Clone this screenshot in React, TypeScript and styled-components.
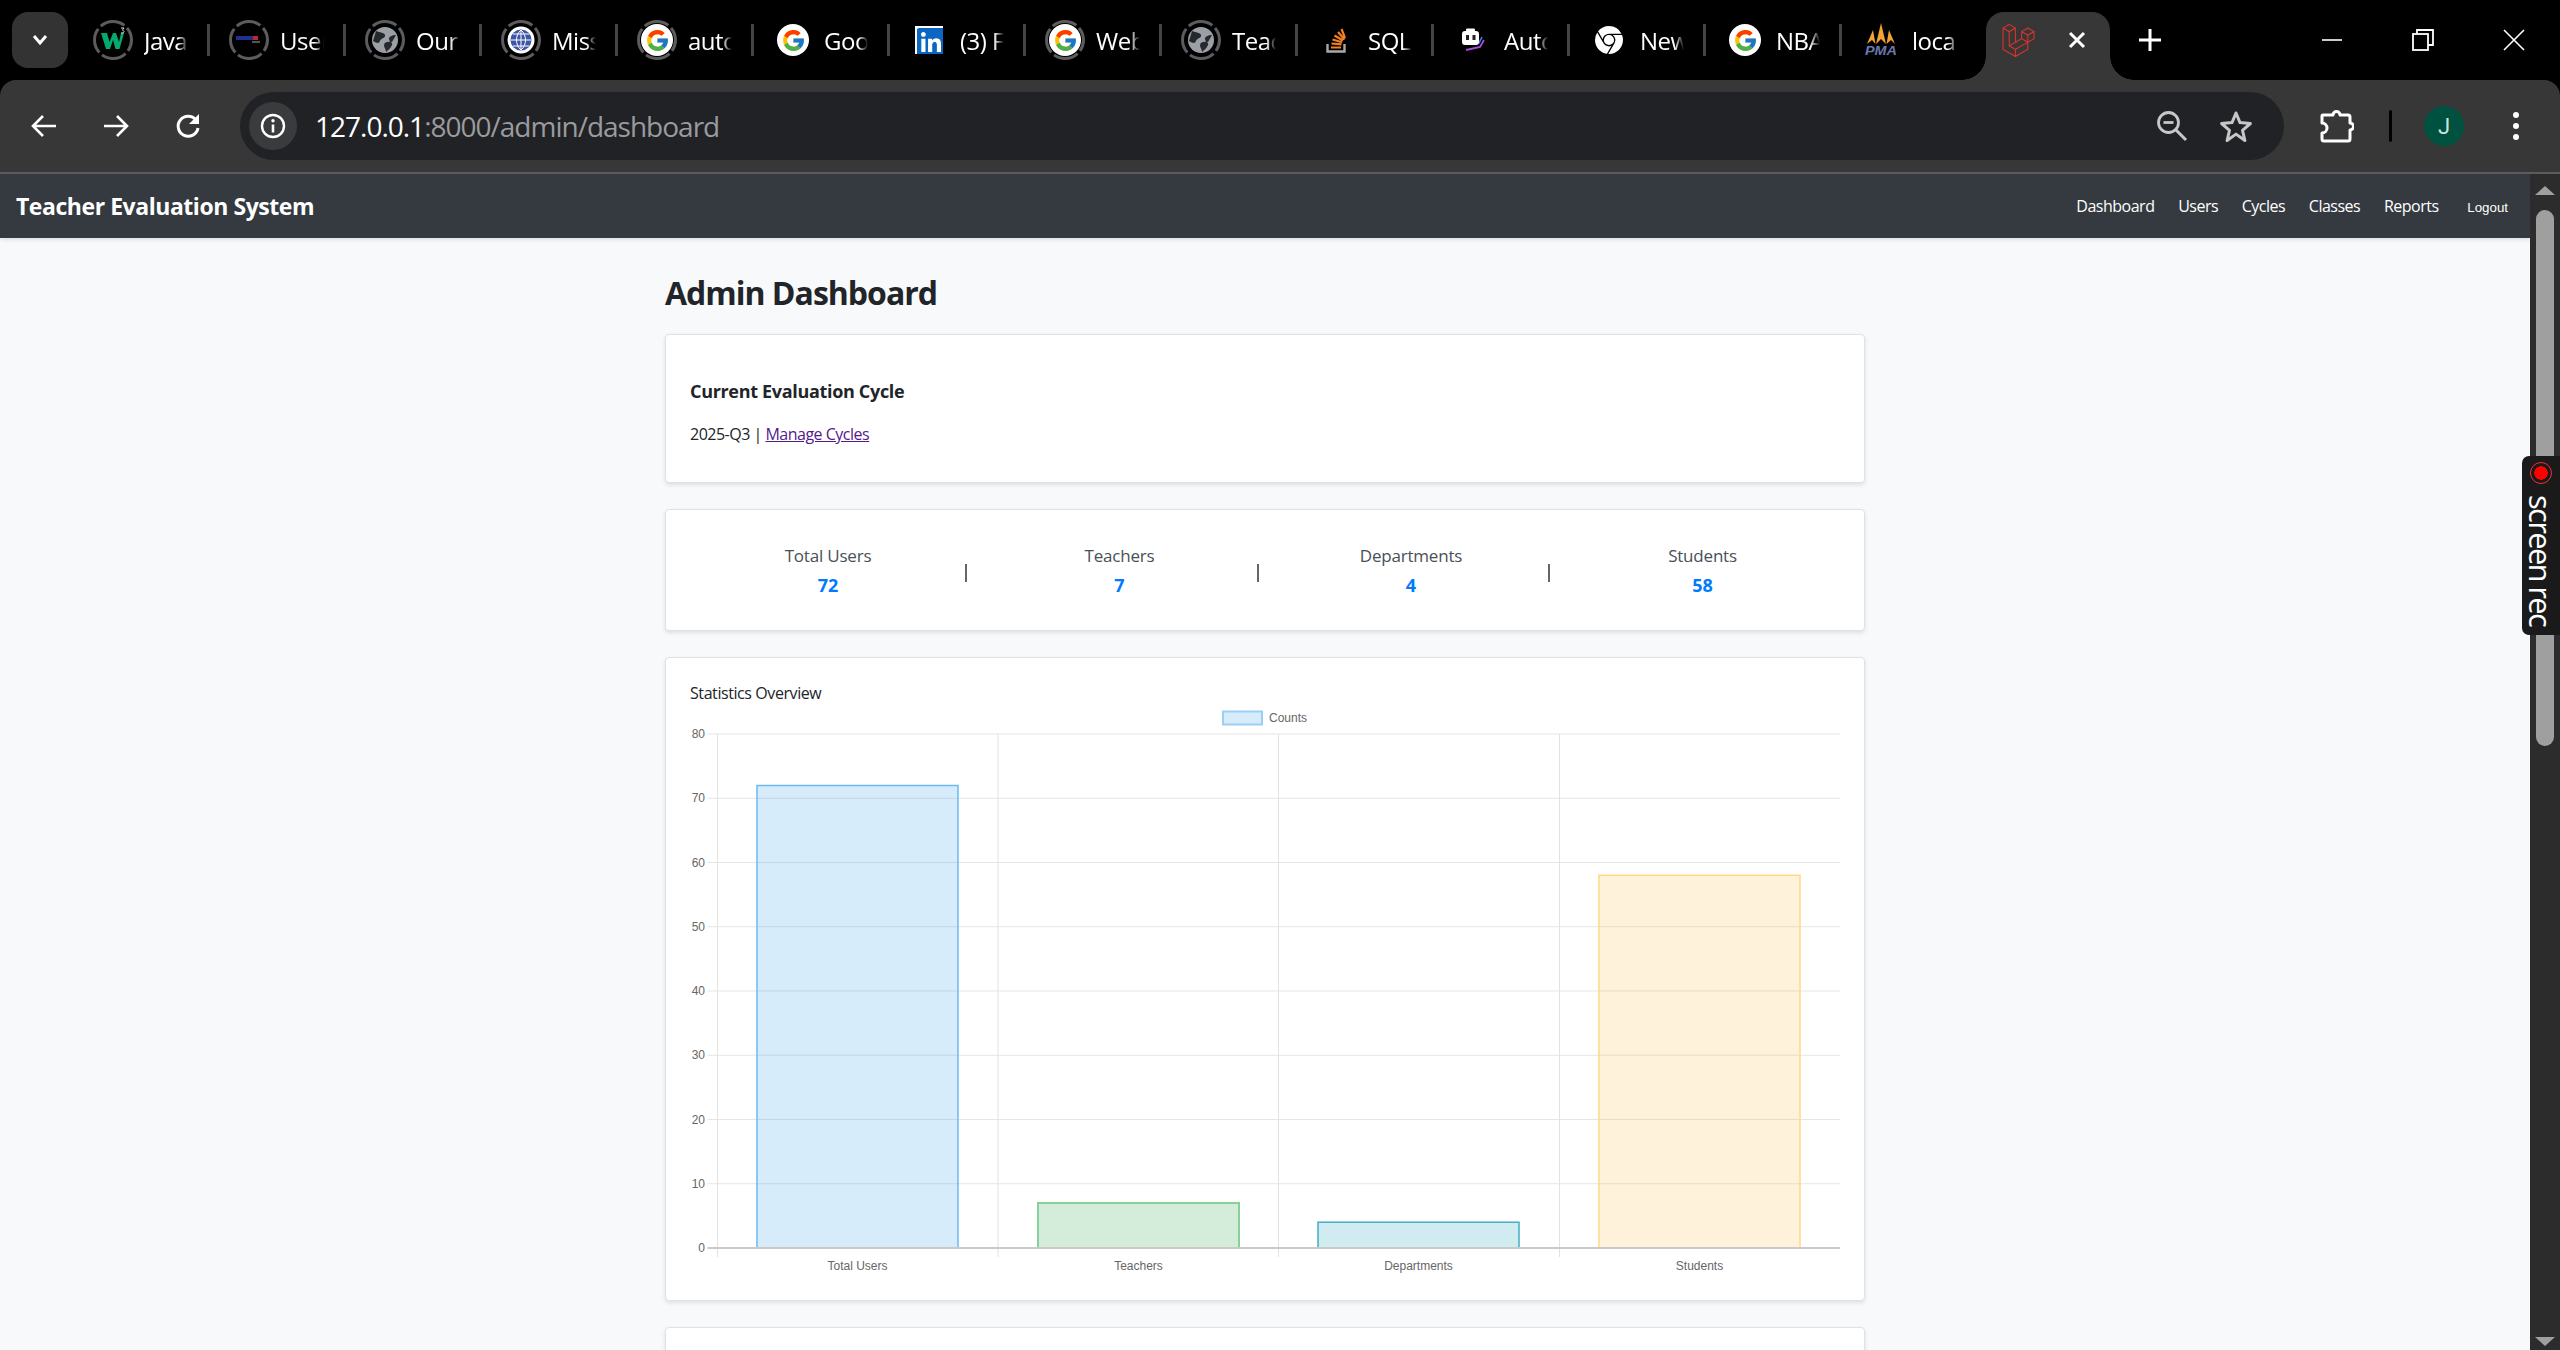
import React from "react";
import styled, { createGlobalStyle } from "styled-components";
import { FcGoogle } from "react-icons/fc";
import { FaLinkedin } from "react-icons/fa";
import { SiLaravel, SiGooglechrome } from "react-icons/si";

const UI_FONT = `"Open Sans", "Noto Sans", sans-serif`;

const GlobalStyle = createGlobalStyle`
    html, body {
        margin: 0;
        height: 100%;
        overflow: hidden;
        background: #000;
        font-family: ${UI_FONT};
    }
    #root { height: 100%; }
`;

type FaviconKind = "w3" | "user" | "globe" | "blueglobe" | "google" | "linkedin" | "so" | "robot" | "chrome" | "pma";

const TABS: { title: string; icon: FaviconKind; loading?: boolean }[] = [
    { title: "Java", icon: "w3", loading: true },
    { title: "User", icon: "user", loading: true },
    { title: "Our", icon: "globe", loading: true },
    { title: "Miss", icon: "blueglobe", loading: true },
    { title: "auto", icon: "google", loading: true },
    { title: "Goog", icon: "google" },
    { title: "(3) F", icon: "linkedin" },
    { title: "Web", icon: "google", loading: true },
    { title: "Teac", icon: "globe", loading: true },
    { title: "SQL", icon: "so" },
    { title: "Auto", icon: "robot" },
    { title: "New", icon: "chrome" },
    { title: "NBA", icon: "google" },
    { title: "loca", icon: "pma" },
];

const STATS = [
    { label: "Total Users", value: 72 },
    { label: "Teachers", value: 7 },
    { label: "Departments", value: 4 },
    { label: "Students", value: 58 },
];

const BARS = [
    { label: "Total Users", value: 72, x: 67, fill: "rgba(54,162,235,0.2)", stroke: "#6bb9ef", sw: 1.5 },
    { label: "Teachers", value: 7, x: 348, fill: "rgba(40,167,69,0.2)", stroke: "#86d09a", sw: 2 },
    { label: "Departments", value: 4, x: 628, fill: "rgba(23,162,184,0.2)", stroke: "#3fb0c2", sw: 1.5 },
    { label: "Students", value: 58, x: 909, fill: "rgba(255,190,70,0.2)", stroke: "#fdd98a", sw: 1.5 },
];

const CHART_TOP = 29;
const CHART_BOTTOM = 543;
const CHART_LEFT = 27.5;
const CHART_RIGHT = 1150;
const BAR_WIDTH = 201;
const GRID_X = [27.5, 308, 588.5, 869.5];
const yFor = (v: number) => CHART_BOTTOM - (v / 80) * (CHART_BOTTOM - CHART_TOP);

function Favicon({ kind }: { kind: FaviconKind }) {
    switch (kind) {
        case "google":
            return (
                <GoogleDisc>
                    <FcGoogle size={25} />
                </GoogleDisc>
            );
        case "linkedin":
            return (
                <LinkedinBox>
                    <FaLinkedin size={32} color="#0a66c2" />
                </LinkedinBox>
            );
        case "chrome":
            return <SiGooglechrome size={28} color="#fff" />;
        case "w3":
            return (
                <svg width="26" height="28" viewBox="0 0 26 28">
                    <path d="M1 7h6l2.5 9L13 7h3l3 9 2-9h3l-4.5 16h-4L13 14l-3 9H6z" fill="#04aa6d" />
                    <path d="M21 2h3l-1.5 2 1.5 1.5-1 1.5h-2" fill="none" stroke="#ddd" strokeWidth="1" />
                </svg>
            );
        case "user":
            return (
                <svg width="28" height="14" viewBox="0 0 28 14">
                    <rect x="1" y="3" width="17" height="4" fill="#23308f" />
                    <rect x="18" y="3" width="5" height="4" fill="#c0272d" />
                    <rect x="17" y="8" width="8" height="2" fill="#555" />
                </svg>
            );
        case "globe":
            return (
                <svg width="28" height="28" viewBox="0 0 28 28">
                    <circle cx="14" cy="14" r="13" fill="#9aa0a6" />
                    <path d="M5 5c4 2 8 1 9 4s-4 3-5 6-4 2-7 0M25 9c-3 0-7 1-7 4s4 3 3 6-4 5-6 7c0-3-2-4-2-7s4-4 8-3" fill="#26282b" />
                </svg>
            );
        case "blueglobe":
            return (
                <svg width="28" height="28" viewBox="0 0 28 28">
                    <circle cx="14" cy="14" r="13.5" fill="#fff" />
                    <circle cx="14" cy="14" r="10.5" fill="#3c55a5" />
                    <path d="M4 14h20M14 4v20M6 8h16M6 20h16M14 4c-6 5-6 15 0 20M14 4c6 5 6 15 0 20" stroke="#fff" strokeWidth="1" fill="none" />
                </svg>
            );
        case "so":
            return (
                <svg width="22" height="26" viewBox="0 0 22 26">
                    <path d="M1.5 17v7.5h17V17" fill="none" stroke="#a9a9a9" strokeWidth="2.4" />
                    <path d="M5 20.5h10M5.5 16.5l10 .8M6.5 12.5l9.5 2.8M8.5 8.5l8.5 5M12 5l6.5 7.5M15.5 2l3.5 9" stroke="#f48024" strokeWidth="2.2" />
                </svg>
            );
        case "robot":
            return (
                <svg width="26" height="24" viewBox="0 0 26 24">
                    <path d="M5 16l14-1 3-6" fill="none" stroke="#4a7fe8" strokeWidth="1.6" />
                    <path d="M6 22l14-3 4-7" fill="none" stroke="#a64de0" strokeWidth="1.8" />
                    <rect x="2" y="3" width="17" height="14" rx="3" fill="#fff" />
                    <rect x="6" y="0.5" width="9" height="3" rx="1" fill="#fff" />
                    <rect x="6" y="7" width="3" height="5" fill="#222" />
                    <rect x="12.5" y="7" width="3" height="5" fill="#222" />
                </svg>
            );
        case "pma":
            return (
                <svg width="34" height="34" viewBox="0 0 34 34">
                    <path d="M3 21L9 7l2.5 14-3.5-4zM12 21L17 0l5 21-5-5zM22.5 21L25 7l6 14-4-4z" fill="#f4a234" />
                    <text x="1" y="32" fontFamily="'Liberation Sans', sans-serif" fontStyle="italic" fontWeight="700" fontSize="13" fill="#6c78af" textLength="32" lengthAdjust="spacingAndGlyphs">PMA</text>
                </svg>
            );
    }
}

function LoadingRing() {
    return (
        <RingSvg width="40" height="40" viewBox="0 0 40 40">
            <circle cx="20" cy="20" r="18.5" fill="none" stroke="#5c5c5c" strokeWidth="3" strokeDasharray="25.5 3.6" strokeDashoffset="14" />
        </RingSvg>
    );
}

function StatsChart() {
    return (
        <ChartSvg width="1150" height="572" viewBox="0 0 1150 572">
            <rect x="533" y="6.5" width="39" height="13" fill="rgba(54,162,235,0.2)" stroke="#9ad0f5" strokeWidth="2" />
            <AxisText x="579" y="17" textAnchor="start">Counts</AxisText>

            {[10, 20, 30, 40, 50, 60, 70, 80].map((v) => (
                <line key={v} x1={CHART_LEFT - 10} x2={CHART_RIGHT} y1={yFor(v)} y2={yFor(v)} stroke="#e5e5e5" strokeWidth="1" />
            ))}
            {GRID_X.map((x) => (
                <line key={x} x1={x} x2={x} y1={CHART_TOP} y2={CHART_BOTTOM + 9} stroke="#e2e2e2" strokeWidth="1" />
            ))}

            {BARS.map((b) => (
                <g key={b.label}>
                    <rect x={b.x} y={yFor(b.value)} width={BAR_WIDTH} height={CHART_BOTTOM - yFor(b.value)} fill={b.fill} />
                    <path
                        d={`M${b.x} ${CHART_BOTTOM}V${yFor(b.value)}H${b.x + BAR_WIDTH}V${CHART_BOTTOM}`}
                        fill="none"
                        stroke={b.stroke}
                        strokeWidth={b.sw}
                    />
                </g>
            ))}

            <line x1={CHART_LEFT - 10} x2={CHART_RIGHT} y1={CHART_BOTTOM} y2={CHART_BOTTOM} stroke="#c9c9c9" strokeWidth="2" />

            {[0, 10, 20, 30, 40, 50, 60, 70, 80].map((v) => (
                <AxisText key={v} x="15" y={yFor(v) + 4} textAnchor="end">
                    {v}
                </AxisText>
            ))}
            {BARS.map((b) => (
                <AxisText key={b.label} x={b.x + BAR_WIDTH / 2} y="565" textAnchor="middle">
                    {b.label}
                </AxisText>
            ))}
        </ChartSvg>
    );
}

export default function App(): React.ReactElement {
    return (
        <Browser>
            <GlobalStyle />
            <TabStrip>
                <TabMenuButton>
                    <svg width="18" height="12" viewBox="0 0 18 12">
                        <path d="M3 2l6 7 6-7" fill="none" stroke="#fff" strokeWidth="3" />
                    </svg>
                </TabMenuButton>
                <TabRow>
                    {TABS.map((t, i) => (
                        <Tab key={i}>
                            <FaviconBox>
                                {t.loading && <LoadingRing />}
                                <Favicon kind={t.icon} />
                            </FaviconBox>
                            <TabTitle>{t.title}</TabTitle>
                            {i < TABS.length - 1 && <TabDivider />}
                        </Tab>
                    ))}
                </TabRow>
                <ActiveTab>
                    <SiLaravel size={33} color="#e0332a" />
                    <svg width="18" height="18" viewBox="0 0 18 18">
                        <path d="M2 2l14 14M16 2L2 16" stroke="#fff" strokeWidth="3" />
                    </svg>
                </ActiveTab>
                <NewTab>
                    <svg width="22" height="22" viewBox="0 0 22 22">
                        <path d="M11 0v22M0 11h22" stroke="#fff" strokeWidth="3" />
                    </svg>
                </NewTab>
                <WindowControls>
                    <WindowButton>
                        <svg width="22" height="22" viewBox="0 0 22 22">
                            <path d="M1 11h20" stroke="#fff" strokeWidth="1.6" />
                        </svg>
                    </WindowButton>
                    <WindowButton>
                        <svg width="22" height="22" viewBox="0 0 22 22">
                            <rect x="1" y="5" width="15" height="16" fill="none" stroke="#fff" strokeWidth="1.8" />
                            <path d="M5 5V1h16v15h-5" fill="none" stroke="#fff" strokeWidth="1.8" />
                        </svg>
                    </WindowButton>
                    <WindowButton>
                        <svg width="22" height="22" viewBox="0 0 22 22">
                            <path d="M1 1l20 20M21 1L1 21" stroke="#fff" strokeWidth="1.6" />
                        </svg>
                    </WindowButton>
                </WindowControls>
            </TabStrip>

            <Toolbar>
                <ToolButton>
                    <svg width="26" height="24" viewBox="0 0 26 24">
                        <path d="M25 12H3M12 2L2 12l10 10" fill="none" stroke="#fff" strokeWidth="2.6" />
                    </svg>
                </ToolButton>
                <ToolButton>
                    <svg width="26" height="24" viewBox="0 0 26 24">
                        <path d="M1 12h22M14 2l10 10-10 10" fill="none" stroke="#fff" strokeWidth="2.6" />
                    </svg>
                </ToolButton>
                <ToolButton>
                    <svg width="26" height="26" viewBox="0 0 26 26">
                        <path d="M21 7a10 10 0 1 0 2 8" fill="none" stroke="#fff" strokeWidth="3" />
                        <path d="M24 1v10H14z" fill="#fff" />
                    </svg>
                </ToolButton>
                <AddressBar>
                    <InfoChip>
                        <svg width="26" height="26" viewBox="0 0 26 26">
                            <circle cx="13" cy="13" r="11" fill="none" stroke="#fff" strokeWidth="2.4" />
                            <path d="M13 11.5v8" stroke="#fff" strokeWidth="2.6" />
                            <circle cx="13" cy="7.8" r="1.7" fill="#fff" />
                        </svg>
                    </InfoChip>
                    <UrlText>
                        127.0.0.1<UrlRest>:8000/admin/dashboard</UrlRest>
                    </UrlText>
                    <AddressAction>
                        <svg width="32" height="32" viewBox="0 0 32 32">
                            <circle cx="12.5" cy="12.5" r="10" fill="none" stroke="#c7c7c7" strokeWidth="2.8" />
                            <path d="M7.5 12.5h10" stroke="#c7c7c7" strokeWidth="2.8" />
                            <path d="M20 20l10 10" stroke="#c7c7c7" strokeWidth="3" />
                        </svg>
                    </AddressAction>
                    <AddressAction>
                        <svg width="34" height="34" viewBox="0 0 34 34">
                            <path d="M17 4l4 9.6 10.4.9-7.9 6.8 2.4 10.2L17 25.1l-8.9 6.4 2.4-10.2-7.9-6.8 10.4-.9z" fill="none" stroke="#c7c7c7" strokeWidth="3" strokeLinejoin="round" />
                        </svg>
                    </AddressAction>
                </AddressBar>
                <ExtensionButton>
                    <svg width="34" height="34" viewBox="0 0 34 34">
                        <path
                            d="M3 6h10a3.5 3.5 0 0 1 7 0h8a2 2 0 0 1 2 2v6a3.5 3.5 0 0 1 0 7v9a2 2 0 0 1-2 2H4a2 2 0 0 1-2-2v-6a5 5 0 0 0 0-10V7a1 1 0 0 1 1-1z"
                            fill="none"
                            stroke="#fff"
                            strokeWidth="3"
                            strokeLinejoin="round"
                        />
                    </svg>
                </ExtensionButton>
                <ToolbarDivider />
                <Avatar>J</Avatar>
                <MenuButton>
                    <MenuDot />
                    <MenuDot />
                    <MenuDot />
                </MenuButton>
            </Toolbar>

            <Viewport>
                <Page>
                    <Navbar>
                        <Brand>Teacher Evaluation System</Brand>
                        <NavLinks>
                            <NavLink>Dashboard</NavLink>
                            <NavLink>Users</NavLink>
                            <NavLink>Cycles</NavLink>
                            <NavLink>Classes</NavLink>
                            <NavLink>Reports</NavLink>
                            <LogoutButton>Logout</LogoutButton>
                        </NavLinks>
                    </Navbar>
                    <Container>
                        <PageTitle>Admin Dashboard</PageTitle>
                        <CycleCard>
                            <CardHeading>Current Evaluation Cycle</CardHeading>
                            <CycleLine>
                                2025-Q3 | <CycleLink href="#">Manage Cycles</CycleLink>
                            </CycleLine>
                        </CycleCard>
                        <StatsCard>
                            {STATS.map((s, i) => (
                                <React.Fragment key={s.label}>
                                    <StatItem>
                                        <StatLabel>{s.label}</StatLabel>
                                        <StatValue>{s.value}</StatValue>
                                    </StatItem>
                                    {i < STATS.length - 1 && <StatDivider />}
                                </React.Fragment>
                            ))}
                        </StatsCard>
                        <ChartCard>
                            <ChartTitle>Statistics Overview</ChartTitle>
                            <StatsChart />
                        </ChartCard>
                        <EmptyCard />
                    </Container>
                </Page>
                <Scrollbar>
                    <ScrollUp />
                    <ScrollThumb />
                    <ScrollDown />
                </Scrollbar>
            </Viewport>

            <RecorderBadge>
                <RecorderDot />
                <RecorderText>screen rec</RecorderText>
            </RecorderBadge>
        </Browser>
    );
}

const Browser = styled.div`
    position: relative;
    display: flex;
    flex-direction: column;
    width: 2560px;
    height: 1350px;
    overflow: hidden;
    background: #000;
`;

const TabStrip = styled.div`
    display: flex;
    align-items: flex-start;
    height: 80px;
    flex: none;
    background: #000;
`;

const TabMenuButton = styled.div`
    display: grid;
    place-items: center;
    width: 56px;
    height: 56px;
    margin: 12px 0 0 12px;
    border-radius: 16px;
    background: #333;
`;

const TabRow = styled.div`
    display: flex;
    margin-left: 6px;
    padding-top: 20px;
`;

const Tab = styled.div`
    display: flex;
    align-items: center;
    width: 136px;
    height: 40px;
    padding-left: 19px;
    box-sizing: border-box;
`;

const FaviconBox = styled.div`
    position: relative;
    display: grid;
    place-items: center;
    flex: none;
    width: 40px;
    height: 40px;
`;

const RingSvg = styled.svg`
    position: absolute;
    inset: 0;
`;

const GoogleDisc = styled.div`
    display: grid;
    place-items: center;
    width: 32px;
    height: 32px;
    border-radius: 50%;
    background: #fff;
`;

const LinkedinBox = styled.div`
    display: grid;
    place-items: center;
    width: 28px;
    height: 28px;
    overflow: hidden;
    background: #fff;
`;

const TabTitle = styled.span`
    width: 46px;
    margin-left: 11px;
    overflow: hidden;
    white-space: nowrap;
    color: #fff;
    font-size: 24px;
    letter-spacing: -0.5px;
    -webkit-mask-image: linear-gradient(to right, #000 78%, transparent 100%);
    mask-image: linear-gradient(to right, #000 78%, transparent 100%);
`;

const TabDivider = styled.span`
    flex: none;
    width: 3px;
    height: 32px;
    margin-left: 19px;
    background: #444;
`;

const ActiveTab = styled.div`
    position: relative;
    display: flex;
    align-items: center;
    justify-content: space-between;
    box-sizing: border-box;
    width: 124px;
    height: 68px;
    margin: 12px 0 0 8px;
    padding: 0 24px 12px 16px;
    border-radius: 18px 18px 0 0;
    background: #373737;

    &::before,
    &::after {
        content: "";
        position: absolute;
        bottom: 0;
        width: 24px;
        height: 24px;
    }
    &::before {
        left: -24px;
        background: radial-gradient(circle at 0 0, transparent 23.5px, #373737 24px);
    }
    &::after {
        right: -24px;
        background: radial-gradient(circle at 100% 0, transparent 23.5px, #373737 24px);
    }
`;

const NewTab = styled.div`
    display: grid;
    place-items: center;
    width: 22px;
    height: 22px;
    margin: 29px 0 0 29px;
`;

const WindowControls = styled.div`
    display: flex;
    margin: 29px 0 0 auto;
    padding-right: 35px;
    gap: 69px;
`;

const WindowButton = styled.div`
    display: grid;
    place-items: center;
    width: 22px;
    height: 22px;
`;

const Toolbar = styled.div`
    display: flex;
    align-items: center;
    flex: none;
    height: 92px;
    padding: 0 8px;
    border-bottom: 2px solid #5c5c5c;
    border-radius: 16px 16px 0 0;
    background: #373737;
`;

const ToolButton = styled.div`
    display: grid;
    place-items: center;
    flex: none;
    width: 72px;
    height: 68px;
`;

const AddressBar = styled.div`
    display: flex;
    align-items: center;
    flex: 1;
    height: 68px;
    margin-left: 16px;
    padding: 0 16px 0 9px;
    border-radius: 34px;
    background: #212225;
`;

const InfoChip = styled.div`
    display: grid;
    place-items: center;
    flex: none;
    width: 48px;
    height: 48px;
    border-radius: 50%;
    background: #3a3b3d;
`;

const UrlText = styled.div`
    flex: 1;
    margin-left: 18px;
    color: #fff;
    font-size: 28px;
    letter-spacing: -1px;
`;

const UrlRest = styled.span`
    color: #9a9b9d;
`;

const AddressAction = styled.div`
    display: grid;
    place-items: center;
    width: 64px;
    height: 64px;
`;

const ExtensionButton = styled(ToolButton)`
    margin-left: 17px;
`;

const ToolbarDivider = styled.div`
    flex: none;
    width: 3px;
    height: 32px;
    margin-left: 16px;
    border-radius: 2px;
    background: #000;
`;

const Avatar = styled.div`
    display: grid;
    place-items: center;
    flex: none;
    width: 40px;
    height: 40px;
    margin-left: 32px;
    border-radius: 50%;
    background: #00513f;
    color: #c5e6dc;
    font-family: "Roboto", sans-serif;
    font-size: 22px;
`;

const MenuButton = styled(ToolButton)`
    display: flex;
    flex-direction: column;
    align-items: center;
    justify-content: center;
    gap: 5px;
    margin-left: 16px;
`;

const MenuDot = styled.span`
    width: 6px;
    height: 6px;
    border-radius: 50%;
    background: #fff;
`;

const Viewport = styled.div`
    display: flex;
    flex: 1;
    min-height: 0;
`;

const Page = styled.div`
    flex: 1;
    min-width: 0;
    overflow: hidden;
    background: #f8f9fa;
`;

const Navbar = styled.nav`
    display: flex;
    align-items: center;
    justify-content: space-between;
    height: 64px;
    padding: 0 22px 0 16px;
    background: #343a40;
    box-shadow: 0 2px 4px rgba(0, 0, 0, 0.1);
`;

const Brand = styled.div`
    color: #fff;
    font-size: 23px;
    font-weight: 700;
    letter-spacing: -0.45px;
`;

const NavLinks = styled.div`
    display: flex;
    align-items: center;
    gap: 23.7px;
`;

const NavLink = styled.a`
    color: #fff;
    font-size: 16px;
    letter-spacing: -0.5px;
`;

const LogoutButton = styled.span`
    margin-left: 5px;
    padding-top: 2px;
    color: #fff;
    font-family: "Liberation Sans", Arial, sans-serif;
    font-size: 13.33px;
`;

const Container = styled.main`
    width: 1200px;
    margin: 0 auto;
    padding-top: 35px;
`;

const PageTitle = styled.h1`
    margin: 0 0 21px;
    color: #212529;
    font-size: 32px;
    line-height: 40px;
    font-weight: 700;
    letter-spacing: -1px;
`;

const Card = styled.section`
    box-sizing: border-box;
    margin-bottom: 26px;
    border: 1px solid #dee2e6;
    border-radius: 4px;
    background: #fff;
    box-shadow: 0 2px 4px rgba(0, 0, 0, 0.1);
`;

const CycleCard = styled(Card)`
    height: 149px;
    padding: 44px 24px 0;
`;

const CardHeading = styled.h3`
    margin: 0 0 19px;
    color: #212529;
    font-size: 18px;
    line-height: 24px;
    font-weight: 700;
    letter-spacing: -0.32px;
`;

const CycleLine = styled.p`
    margin: 0;
    color: #212529;
    font-size: 16px;
    line-height: 24px;
    letter-spacing: -0.5px;
`;

const CycleLink = styled.a`
    color: #551a8b;
`;

const StatsCard = styled(Card)`
    display: flex;
    height: 122px;
    padding: 31.5px 24px 0;
`;

const StatItem = styled.div`
    flex: none;
    width: 276px;
    text-align: center;
`;

const StatLabel = styled.div`
    color: #495057;
    font-size: 17px;
    line-height: 28px;
    letter-spacing: -0.2px;
`;

const StatValue = styled.div`
    color: #007bff;
    font-size: 18px;
    line-height: 30px;
    font-weight: 700;
`;

const StatDivider = styled.div`
    flex: none;
    width: 2px;
    height: 18px;
    margin: 22.5px 14.5px 0 -1px;
    background: #666;
`;

const ChartCard = styled(Card)`
    height: 644px;
    padding: 23px 24px 0;
`;

const ChartTitle = styled.div`
    height: 24px;
    color: #212529;
    font-size: 16px;
    line-height: 24px;
    letter-spacing: -0.42px;
`;

const ChartSvg = styled.svg`
    display: block;
`;

const AxisText = styled.text`
    fill: #666;
    font-family: "Liberation Sans", Arial, sans-serif;
    font-size: 12px;
`;

const EmptyCard = styled(Card)`
    height: 200px;
`;

const Scrollbar = styled.div`
    flex: none;
    display: flex;
    flex-direction: column;
    align-items: center;
    width: 30px;
    background: #2c2c2c;
`;

const ScrollUp = styled.div`
    width: 0;
    height: 0;
    margin-top: 12px;
    border-left: 10px solid transparent;
    border-right: 10px solid transparent;
    border-bottom: 9px solid #9f9f9f;
`;

const ScrollThumb = styled.div`
    width: 18px;
    height: 536px;
    margin-top: 15px;
    border-radius: 9px;
    background: #9f9f9f;
`;

const ScrollDown = styled.div`
    width: 0;
    height: 0;
    margin-top: auto;
    margin-bottom: 4px;
    border-left: 10px solid transparent;
    border-right: 10px solid transparent;
    border-top: 9px solid #9f9f9f;
`;

const RecorderBadge = styled.div`
    position: absolute;
    top: 456px;
    right: 0;
    display: flex;
    flex-direction: column;
    align-items: center;
    box-sizing: border-box;
    width: 38px;
    height: 179px;
    padding-top: 6px;
    border-radius: 7px 0 0 7px;
    background: #1a1a1a;
`;

const RecorderDot = styled.div`
    box-sizing: border-box;
    width: 22px;
    height: 22px;
    border: 1px solid #f03030;
    border-radius: 50%;
    background: radial-gradient(circle, #ff0000 0 6.5px, #1a1a1a 7px);
`;

const RecorderText = styled.div`
    margin-top: 11px;
    color: #fff;
    font-family: "Open Sans", "Liberation Sans", sans-serif;
    font-size: 31px;
    line-height: 36px;
    letter-spacing: -1.7px;
    word-spacing: -1px;
    white-space: nowrap;
    writing-mode: vertical-rl;
`;
